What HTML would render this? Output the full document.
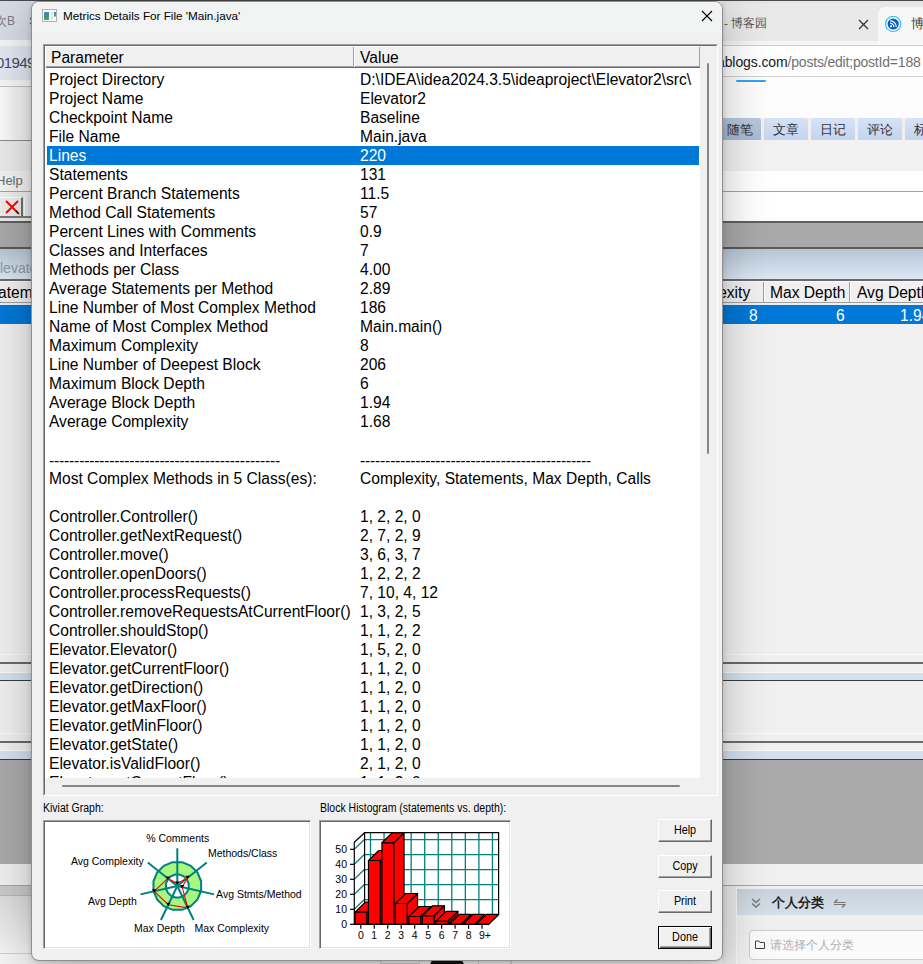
<!DOCTYPE html>
<html><head><meta charset="utf-8">
<style>
*{box-sizing:border-box;margin:0;padding:0}
html,body{width:923px;height:964px;overflow:hidden;background:#f0f0f0;font-family:"Liberation Sans",sans-serif;position:relative}
.a{position:absolute}
.t{position:absolute;white-space:pre;line-height:1}
.r{position:absolute;left:0;width:655px;height:19px;font-size:15.6px;line-height:19px;color:#000;white-space:pre}
.r span{position:absolute;top:-0.5px}
.r .p{left:4px}
.r .v{left:315px}
.r .d{letter-spacing:-0.17px;top:0.5px}
.sel{background:#0078d7;color:#fff;left:2px;width:652px}
.sel .p{left:2px}.sel .v{left:313px}
.hd{position:absolute;height:21px;background:#f0f0f0;border-top:1px solid #fff;border-left:1px solid #fff;box-shadow:inset -1px -1px 0 #a0a0a0, 1px 1px 0 #696969;font-size:15.6px;white-space:pre}
.hd span{position:absolute;left:5px;top:1px;line-height:19px}
.sm{font-size:12px;transform:scaleX(0.875);transform-origin:0 0;color:#000}
.box{position:absolute;background:#fff;border-top:1px solid #a0a0a0;border-left:1px solid #a0a0a0;border-right:1px solid #fff;border-bottom:1px solid #fff;box-shadow:inset 1px 1px 0 #696969, inset -1px -1px 0 #e3e3e3}
.btn{position:absolute;width:54px;height:23px;background:#f0f0f0;border-top:1px solid #fff;border-left:1px solid #fff;border-right:1px solid #696969;border-bottom:1px solid #696969;box-shadow:inset -1px -1px 0 #a0a0a0;font-size:12px;text-align:center}
.btn span{position:absolute;left:0;right:0;top:4px;line-height:1;transform:scaleX(0.9)}
.def{border:1px solid #000;box-shadow:inset 1px 1px 0 #fff,inset -1px -1px 0 #696969,inset -2px -2px 0 #a0a0a0}
</style></head><body>
<!-- ===== background ===== -->
<div id="bg">
<div class="a" style="left:0;top:0;width:923px;height:1px;background:#4a4a4a"></div>
<!-- left strip top -->
<div class="a" style="left:0;top:1px;width:40px;height:39px;background:#d8dde5"></div>
<div class="t" style="left:-5px;top:15px;font-size:12px;color:#7a7a7a">次B</div><div class="a" style="left:16px;top:12px;width:8px;height:16px;background:linear-gradient(90deg,rgba(216,221,229,0),#d8dde5)"></div><svg class="a" style="left:29px;top:17px" width="6" height="8"><path d="M1 1 L7 7 M7 1 L1 7" stroke="#555" stroke-width="1.2"/></svg>
<div class="a" style="left:0;top:40px;width:40px;height:6px;background:#f6f6f6"></div>
<div class="a" style="left:0;top:46px;width:40px;height:34px;background:#e3e8f1"></div>
<div class="t" style="left:-4px;top:55px;font-size:15px;letter-spacing:-0.6px;color:#3a4a66">01949</div>
<div class="a" style="left:0;top:80px;width:40px;height:6px;background:#f7f7f7"></div>
<div class="a" style="left:0;top:86px;width:40px;height:1px;background:#c4c4c4"></div>
<div class="a" style="left:0;top:87px;width:40px;height:53px;background:linear-gradient(90deg,#fbfbfb,#eaeaea)"></div>
<div class="a" style="left:0;top:140px;width:40px;height:1px;background:#8c8c8c"></div>
<div class="a" style="left:0;top:141px;width:40px;height:30px;background:#ebebeb"></div>
<div class="a" style="left:0;top:171px;width:40px;height:20px;background:#f3f3f3"></div>
<div class="t" style="left:-4px;top:174px;font-size:13px;color:#6a6a6a">Help</div>
<div class="a" style="left:0;top:216px;width:40px;height:2px;background:#7a7a7a"></div>
<div class="a" style="left:0;top:192px;width:40px;height:24px;background:#efefef"></div>
<div class="a" style="left:1px;top:197px;width:22px;height:19px;background:#ececec;border-right:2px solid #6e6e6e;border-top:1px solid #fff"></div>
<svg class="a" style="left:3px;top:199px" width="18" height="16"><path d="M3 2 L15 14 M15 2 L3 14" stroke="#f00" stroke-width="1.8"/><path d="M13 12 L16 15" stroke="#000" stroke-width="1.2"/></svg>
<div class="a" style="left:24px;top:197px;width:10px;height:19px;background:#ececec;border-left:1px solid #fff"></div>
<!-- right strip top -->
<div class="a" style="left:722px;top:1px;width:201px;height:44px;background:#e6e6e6"></div><div class="a" style="left:722px;top:41px;width:201px;height:4px;background:#f5f5f5"></div><div class="a" style="left:700px;top:4px;width:178px;height:37px;background:#e9e9e9;border-radius:0 0 6px 0"></div>
<div class="a" style="left:878px;top:7px;width:60px;height:38px;background:#f7f7f7;border-radius:7px 0 0 0"></div>
<div class="t" style="left:724px;top:18px;font-size:11.8px;color:#555">- 博客园</div>
<svg class="a" style="left:858px;top:19px" width="11" height="11"><path d="M1 1 L10 10 M10 1 L1 10" stroke="#333" stroke-width="1.3"/></svg>
<svg class="a" style="left:885px;top:16px" width="17" height="17"><circle cx="8.2" cy="8" r="7.6" fill="#fff" stroke="#3ec4f6" stroke-width="1.3"/><circle cx="8.2" cy="8" r="5.6" fill="#0b5fc1"/><circle cx="6" cy="10.3" r="1.1" fill="#fff"/><path d="M5.2 7.3 A3.6 3.6 0 0 1 8.9 11 M5.2 4.9 A6 6 0 0 1 11.3 11" stroke="#fff" stroke-width="1.2" fill="none"/></svg>
<div class="t" style="left:911px;top:17px;font-size:13px;color:#3a3a3a">博</div>
<div class="a" style="left:722px;top:45px;width:201px;height:1px;background:#cfcfcf"></div>
<div class="a" style="left:722px;top:46px;width:201px;height:30px;background:#ffffff"></div>
<div class="t" style="left:717px;top:55px;font-size:14px;letter-spacing:-0.1px;color:#1a1a1a">ablogs.com<span style="color:#6f6f6f;letter-spacing:-0.2px">/posts/edit;postId=188</span></div>
<div class="a" style="left:722px;top:76px;width:201px;height:1px;background:#cfcfcf"></div>
<div class="a" style="left:722px;top:77px;width:201px;height:41px;background:#fdfdfd"></div>
<div class="a" style="left:736px;top:80px;width:30px;height:2px;background:#36a3f0;border-radius:1px"></div>
<div class="a" style="left:722px;top:118px;width:39px;height:22px;background:linear-gradient(#b9c8df,#a8bad6);border-radius:0 3px 0 0"></div>
<div class="a" style="left:764px;top:118px;width:44px;height:22px;background:linear-gradient(#d6e3f7,#c3d4ee);border-radius:3px 3px 0 0"></div>
<div class="a" style="left:811px;top:118px;width:44px;height:22px;background:linear-gradient(#d6e3f7,#c3d4ee);border-radius:3px 3px 0 0"></div>
<div class="a" style="left:858px;top:118px;width:44px;height:22px;background:linear-gradient(#d6e3f7,#c3d4ee);border-radius:3px 3px 0 0"></div>
<div class="a" style="left:905px;top:118px;width:44px;height:22px;background:linear-gradient(#d6e3f7,#c3d4ee);border-radius:3px 3px 0 0"></div>
<div class="t" style="left:727px;top:123px;font-size:13px;color:#333">随笔</div>
<div class="t" style="left:773px;top:123px;font-size:13px;color:#333">文章</div>
<div class="t" style="left:820px;top:123px;font-size:13px;color:#333">日记</div>
<div class="t" style="left:867px;top:123px;font-size:13px;color:#333">评论</div>
<div class="t" style="left:914px;top:123px;font-size:13px;color:#333">标</div>
<div class="a" style="left:722px;top:140px;width:201px;height:31px;background:#f2f2f2"></div>
<div class="a" style="left:722px;top:171px;width:201px;height:20px;background:#ffffff"></div>
<div class="a" style="left:722px;top:192px;width:201px;height:29px;background:#ffffff"></div>
<!-- shared bands -->
<div class="a" style="left:0;top:191px;width:923px;height:1px;background:#a4a4a4"></div>
<div class="a" style="left:0;top:218px;width:40px;height:3px;background:#ececec"></div>
<div class="a" style="left:0;top:221px;width:923px;height:2px;background:#5f5f5f"></div>
<div class="a" style="left:0;top:223px;width:923px;height:24px;background:#a9a9a9"></div>
<div class="a" style="left:0;top:247px;width:923px;height:2px;background:#5a5a5a"></div>
<div class="a" style="left:0;top:249px;width:923px;height:30px;background:linear-gradient(#b6c6d6,#dce7f2)"></div>
<div class="t" style="left:0px;top:261px;font-size:14px;color:#8d98a6">levato</div>
<div class="a" style="left:0;top:279px;width:923px;height:2px;background:#6a6a6a"></div><div class="a" style="left:0;top:281px;width:923px;height:1px;background:#fafafa"></div>
<div class="a" style="left:0;top:282px;width:923px;height:21px;background:#f0f0f0"></div>
<div class="a" style="left:0;top:302px;width:923px;height:1px;background:#a0a0a0"></div>
<div class="a" style="left:0;top:303px;width:923px;height:2px;background:#f0f0f0"></div>
<div class="t" style="left:-2px;top:285px;font-size:15.6px;color:#000">atem</div>
<div class="a" style="left:763px;top:282px;width:1px;height:20px;background:#a0a0a0"></div>
<div class="a" style="left:764px;top:282px;width:1px;height:20px;background:#fff"></div>
<div class="a" style="left:849px;top:282px;width:1px;height:20px;background:#a0a0a0"></div>
<div class="a" style="left:850px;top:282px;width:1px;height:20px;background:#fff"></div>
<div class="t" style="left:706px;top:285px;font-size:15.6px;color:#000">plexity</div>
<div class="t" style="left:770px;top:285px;font-size:15.6px;color:#000">Max Depth</div>
<div class="t" style="left:857px;top:285px;font-size:15.6px;color:#000">Avg Depth</div>
<div class="a" style="left:0;top:305px;width:923px;height:19px;background:#0078d7"></div>
<div class="t" style="left:749px;top:308px;font-size:15.6px;color:#fff">8</div>
<div class="t" style="left:836px;top:308px;font-size:15.6px;color:#fff">6</div>
<div class="t" style="left:900px;top:308px;font-size:15.6px;color:#fff">1.94</div>
<div class="a" style="left:0;top:324px;width:923px;height:330px;background:#f0f0f0"></div>
<div class="a" style="left:0;top:654px;width:923px;height:1px;background:#fbfbfb"></div>
<div class="a" style="left:0;top:662px;width:923px;height:2px;background:#6a6a6a"></div>
<div class="a" style="left:0;top:672px;width:923px;height:1px;background:#fafafa"></div>
<div class="a" style="left:0;top:673px;width:923px;height:7px;background:#d3e1ef"></div>
<div class="a" style="left:0;top:680px;width:923px;height:1px;background:#3c3c3c"></div>
<div class="a" style="left:0;top:733px;width:923px;height:1px;background:#fbfbfb"></div>
<div class="a" style="left:0;top:741px;width:923px;height:2px;background:#6a6a6a"></div>
<div class="a" style="left:0;top:750px;width:923px;height:1px;background:#fafafa"></div>
<div class="a" style="left:0;top:751px;width:923px;height:8px;background:#d3e1ef"></div>
<div class="a" style="left:0;top:759px;width:923px;height:1px;background:#3c3c3c"></div>
<div class="a" style="left:0;top:760px;width:923px;height:104px;background:#aaaaaa"></div>
<div class="a" style="left:0;top:864px;width:923px;height:21px;background:#f0f0f0"></div>
<div class="a" style="left:0;top:885px;width:923px;height:1px;background:#a8a8a8"></div>
<div class="a" style="left:0;top:886px;width:40px;height:9px;background:#cacaca"></div>
<div class="a" style="left:0;top:895px;width:40px;height:1px;background:#b8b8b8"></div>
<div class="a" style="left:0;top:896px;width:40px;height:57px;background:linear-gradient(#dcdcdc,#f4f4f4)"></div>
<div class="a" style="left:0;top:954px;width:923px;height:10px;background:#f4f4f4"></div><div class="a" style="left:0;top:953px;width:923px;height:1px;background:#cfcfcf"></div>
<div class="a" style="left:722px;top:886px;width:201px;height:78px;background:#f0f0f0"></div>
<div class="a" style="left:722px;top:886px;width:15px;height:78px;background:#e9e9e9"></div><div class="a" style="left:736px;top:886px;width:1px;height:78px;background:#f8f8f8"></div><div class="a" style="left:737px;top:889px;width:186px;height:26px;background:linear-gradient(#c9d3dd,#d6dfe8)"></div>
<svg class="a" style="left:749px;top:896px" width="14" height="14"><path d="M3 3 L7 6.5 L11 3 M3 7.5 L7 11 L11 7.5" stroke="#777" stroke-width="1.6" fill="none"/></svg>
<div class="t" style="left:772px;top:896px;font-size:13px;font-weight:bold;color:#222">个人分类</div>
<div class="t" style="left:833px;top:895px;font-size:16px;color:#777">⇋</div>
<div class="a" style="left:737px;top:920px;width:186px;height:44px;background:#efefef"></div>
<div class="a" style="left:749px;top:930px;width:180px;height:30px;background:#fafafa;border:1px solid #cdcdcd;border-radius:4px"></div>
<svg class="a" style="left:754px;top:939px" width="12" height="11"><path d="M1.5 2 H5 L6 3.5 H10.5 V9.5 H1.5 Z" stroke="#444" stroke-width="1" fill="none"/></svg>
<div class="t" style="left:770px;top:939px;font-size:12px;color:#b0b0b0">请选择个人分类</div>
<div class="a" style="left:380px;top:957px;width:40px;height:7px;border:1px solid #cfcfcf;border-radius:20px 20px 0 0"></div>
<div class="a" style="left:430px;top:958px;width:34px;height:8px;background:#111;border-radius:12px 12px 0 0"></div>
<div class="a" style="left:478px;top:955px;width:1px;height:9px;background:#cfcfcf"></div>
<div class="a" style="left:510px;top:955px;width:2px;height:9px;background:#d6d6d6"></div>
</div>

<!-- ===== dialog ===== -->
<div id="dlg" class="a" style="left:31px;top:1px;width:692px;height:960px;background:#f0f0f0;border:1px solid #8f8f8f;border-radius:8px;box-shadow:0 1px 5px rgba(0,0,0,0.18),0 8px 48px rgba(0,0,0,0.26);overflow:hidden">
  <div class="a" style="left:0;top:0;width:690px;height:31px;background:#f2f4f3"></div>
</div>
<!-- title -->
<svg class="a" style="left:42px;top:9px" width="15" height="13"><defs><linearGradient id="ig" x1="0" y1="0" x2="0.4" y2="1"><stop offset="0" stop-color="#5a86c8"/><stop offset="0.5" stop-color="#3f8a90"/><stop offset="1" stop-color="#4aaa60"/></linearGradient></defs><rect x="0.5" y="0.5" width="14" height="12" fill="#fbfbfb" stroke="#aeb2b6"/><rect x="2" y="3" width="5" height="8" fill="url(#ig)"/><rect x="8.8" y="3" width="2.4" height="8" fill="#e4e4e4"/><rect x="12" y="3" width="2" height="4.6" fill="url(#ig)"/></svg>
<div class="t" style="left:63px;top:10px;font-size:11.7px;color:#000">Metrics Details For File 'Main.java'</div>
<svg class="a" style="left:701px;top:10px" width="12" height="12"><path d="M1 1 L11 11 M11 1 L1 11" stroke="#000" stroke-width="1.1"/></svg>
<!-- list box -->
<div class="a" style="left:43px;top:44px;width:675px;height:752px;border-top:1px solid #a0a0a0;border-left:1px solid #a0a0a0;border-right:1px solid #fff;border-bottom:1px solid #fff"></div>
<div class="a" style="left:44px;top:45px;width:673px;height:750px;border-top:1px solid #696969;border-left:1px solid #696969;border-right:1px solid #e3e3e3;border-bottom:1px solid #e3e3e3"></div>
<div class="a" style="left:45px;top:46px;width:671px;height:748px;background:#fff"></div>
<div class="hd" style="left:45px;top:46px;width:309px"><span>Parameter</span></div>
<div class="hd" style="left:354px;top:46px;width:346px"><span>Value</span></div>
<div id="rows" class="a" style="left:45px;top:68px;width:655px;height:710px;overflow:hidden">
<div class="a" style="left:0;top:2px;width:655px;height:720px">
<div class="r" style="top:0px"><span class="p">Project Directory</span><span class="v">D:\IDEA\idea2024.3.5\ideaproject\Elevator2\src\</span></div>
<div class="r" style="top:19px"><span class="p">Project Name</span><span class="v">Elevator2</span></div>
<div class="r" style="top:38px"><span class="p">Checkpoint Name</span><span class="v">Baseline</span></div>
<div class="r" style="top:57px"><span class="p">File Name</span><span class="v">Main.java</span></div>
<div class="r sel" style="top:76px"><span class="p">Lines</span><span class="v">220</span></div>
<div class="r" style="top:95px"><span class="p">Statements</span><span class="v">131</span></div>
<div class="r" style="top:114px"><span class="p">Percent Branch Statements</span><span class="v">11.5</span></div>
<div class="r" style="top:133px"><span class="p">Method Call Statements</span><span class="v">57</span></div>
<div class="r" style="top:152px"><span class="p">Percent Lines with Comments</span><span class="v">0.9</span></div>
<div class="r" style="top:171px"><span class="p">Classes and Interfaces</span><span class="v">7</span></div>
<div class="r" style="top:190px"><span class="p">Methods per Class</span><span class="v">4.00</span></div>
<div class="r" style="top:209px"><span class="p">Average Statements per Method</span><span class="v">2.89</span></div>
<div class="r" style="top:228px"><span class="p">Line Number of Most Complex Method</span><span class="v">186</span></div>
<div class="r" style="top:247px"><span class="p">Name of Most Complex Method</span><span class="v">Main.main()</span></div>
<div class="r" style="top:266px"><span class="p">Maximum Complexity</span><span class="v">8</span></div>
<div class="r" style="top:285px"><span class="p">Line Number of Deepest Block</span><span class="v">206</span></div>
<div class="r" style="top:304px"><span class="p">Maximum Block Depth</span><span class="v">6</span></div>
<div class="r" style="top:323px"><span class="p">Average Block Depth</span><span class="v">1.94</span></div>
<div class="r" style="top:342px"><span class="p">Average Complexity</span><span class="v">1.68</span></div>
<div class="r" style="top:361px"><span class="p"></span><span class="v"></span></div>
<div class="r" style="top:380px"><span class="p d">----------------------------------------------</span><span class="v d">----------------------------------------------</span></div>
<div class="r" style="top:399px"><span class="p">Most Complex Methods in 5 Class(es):</span><span class="v">Complexity, Statements, Max Depth, Calls</span></div>
<div class="r" style="top:418px"><span class="p"></span><span class="v"></span></div>
<div class="r" style="top:437px"><span class="p">Controller.Controller()</span><span class="v">1, 2, 2, 0</span></div>
<div class="r" style="top:456px"><span class="p">Controller.getNextRequest()</span><span class="v">2, 7, 2, 9</span></div>
<div class="r" style="top:475px"><span class="p">Controller.move()</span><span class="v">3, 6, 3, 7</span></div>
<div class="r" style="top:494px"><span class="p">Controller.openDoors()</span><span class="v">1, 2, 2, 2</span></div>
<div class="r" style="top:513px"><span class="p">Controller.processRequests()</span><span class="v">7, 10, 4, 12</span></div>
<div class="r" style="top:532px"><span class="p">Controller.removeRequestsAtCurrentFloor()</span><span class="v">1, 3, 2, 5</span></div>
<div class="r" style="top:551px"><span class="p">Controller.shouldStop()</span><span class="v">1, 1, 2, 2</span></div>
<div class="r" style="top:570px"><span class="p">Elevator.Elevator()</span><span class="v">1, 5, 2, 0</span></div>
<div class="r" style="top:589px"><span class="p">Elevator.getCurrentFloor()</span><span class="v">1, 1, 2, 0</span></div>
<div class="r" style="top:608px"><span class="p">Elevator.getDirection()</span><span class="v">1, 1, 2, 0</span></div>
<div class="r" style="top:627px"><span class="p">Elevator.getMaxFloor()</span><span class="v">1, 1, 2, 0</span></div>
<div class="r" style="top:646px"><span class="p">Elevator.getMinFloor()</span><span class="v">1, 1, 2, 0</span></div>
<div class="r" style="top:665px"><span class="p">Elevator.getState()</span><span class="v">1, 1, 2, 0</span></div>
<div class="r" style="top:684px"><span class="p">Elevator.isValidFloor()</span><span class="v">2, 1, 2, 0</span></div>
<div class="r" style="top:703px"><span class="p">Elevator.setCurrentFloor()</span><span class="v">1, 1, 2, 0</span></div>
</div>
</div>
<div class="a" style="left:700px;top:46px;width:17px;height:749px;background:#f0f0f0"></div>
<div class="a" style="left:45px;top:778px;width:655px;height:17px;background:#f0f0f0"></div>
<div class="a" style="left:707px;top:63px;width:2px;height:391px;background:#858585;border-radius:1px"></div>
<div class="a" style="left:62px;top:785px;width:618px;height:2px;background:#858585;border-radius:1px"></div>
<!-- bottom labels -->
<div class="t sm" style="left:43px;top:802px">Kiviat Graph:</div>
<div class="t sm" style="left:320px;top:802px">Block Histogram (statements vs. depth):</div>
<!-- kiviat box -->
<div class="box" style="left:43px;top:820px;width:268px;height:129px"></div>
<!-- histogram box -->
<div class="box" style="left:319px;top:820px;width:192px;height:129px"></div>
<!-- GRAPHS -->
<svg class="a" style="left:43px;top:820px" width="268" height="128" viewBox="0 0 268 128">
<polygon points="139.04,42.17 147.80,45.80 154.50,52.50 158.13,61.26 158.13,70.74 154.50,79.50 147.80,86.20 139.04,89.83 129.56,89.83 120.80,86.20 114.10,79.50 110.47,70.74 110.47,61.26 114.10,52.50 120.80,45.80 129.56,42.17" fill="#a6f87e" stroke="#008080" stroke-width="2"/>
<polygon points="136.56,54.62 140.74,56.35 143.95,59.56 145.68,63.74 145.68,68.26 143.95,72.44 140.74,75.65 136.56,77.38 132.04,77.38 127.86,75.65 124.65,72.44 122.92,68.26 122.92,63.74 124.65,59.56 127.86,56.35 132.04,54.62" fill="#ffffff" stroke="#008080" stroke-width="2"/>
<line x1="134.30" y1="66.00" x2="134.30" y2="28.30" stroke="#008080" stroke-width="2"/>
<line x1="134.30" y1="66.00" x2="163.78" y2="42.49" stroke="#008080" stroke-width="2"/>
<line x1="134.30" y1="66.00" x2="171.05" y2="74.39" stroke="#008080" stroke-width="2"/>
<line x1="134.30" y1="66.00" x2="150.66" y2="99.97" stroke="#008080" stroke-width="2"/>
<line x1="134.30" y1="66.00" x2="117.94" y2="99.97" stroke="#008080" stroke-width="2"/>
<line x1="134.30" y1="66.00" x2="97.55" y2="74.39" stroke="#008080" stroke-width="2"/>
<line x1="134.30" y1="66.00" x2="104.82" y2="42.49" stroke="#008080" stroke-width="2"/>
<polygon points="134.30,63.50 144.62,57.77 139.17,67.11 144.80,87.80 125.28,84.74 111.19,71.27 124.84,58.46" fill="none" stroke="#ff0000" stroke-width="1.1"/>
<path d="M132.10,61.50 L136.50,61.50 L134.30,64.70 Z" fill="#000"/>
<path d="M142.42,55.77 L146.82,55.77 L144.62,58.97 Z" fill="#000"/>
<path d="M136.97,65.11 L141.37,65.11 L139.17,68.31 Z" fill="#000"/>
<path d="M142.60,85.80 L147.00,85.80 L144.80,89.00 Z" fill="#000"/>
<path d="M123.08,82.74 L127.48,82.74 L125.28,85.94 Z" fill="#000"/>
<path d="M108.99,69.27 L113.39,69.27 L111.19,72.47 Z" fill="#000"/>
<path d="M122.64,56.46 L127.04,56.46 L124.84,59.66 Z" fill="#000"/>
<text x="103.20" y="22.30" font-size="10.5" font-family="Liberation Sans">% Comments</text>
<text x="164.90" y="37.20" font-size="10.5" font-family="Liberation Sans">Methods/Class</text>
<text x="27.90" y="44.60" font-size="10.5" font-family="Liberation Sans">Avg Complexity</text>
<text x="173.10" y="78.40" font-size="10.5" font-family="Liberation Sans">Avg Stmts/Method</text>
<text x="44.90" y="84.60" font-size="10.5" font-family="Liberation Sans">Avg Depth</text>
<text x="91.00" y="112.30" font-size="10.5" font-family="Liberation Sans">Max Depth</text>
<text x="151.40" y="112.30" font-size="10.5" font-family="Liberation Sans">Max Complexity</text>
</svg>
<svg class="a" style="left:319px;top:820px" width="191" height="128" viewBox="0 0 191 128">
<line x1="51.50" y1="12.70" x2="51.50" y2="94.30" stroke="#008080" stroke-width="1.3"/>
<line x1="65.05" y1="12.70" x2="65.05" y2="94.30" stroke="#008080" stroke-width="1.3"/>
<line x1="78.60" y1="12.70" x2="78.60" y2="94.30" stroke="#008080" stroke-width="1.3"/>
<line x1="92.15" y1="12.70" x2="92.15" y2="94.30" stroke="#008080" stroke-width="1.3"/>
<line x1="105.70" y1="12.70" x2="105.70" y2="94.30" stroke="#008080" stroke-width="1.3"/>
<line x1="119.25" y1="12.70" x2="119.25" y2="94.30" stroke="#008080" stroke-width="1.3"/>
<line x1="132.80" y1="12.70" x2="132.80" y2="94.30" stroke="#008080" stroke-width="1.3"/>
<line x1="146.35" y1="12.70" x2="146.35" y2="94.30" stroke="#008080" stroke-width="1.3"/>
<line x1="159.90" y1="12.70" x2="159.90" y2="94.30" stroke="#008080" stroke-width="1.3"/>
<line x1="173.45" y1="12.70" x2="173.45" y2="94.30" stroke="#008080" stroke-width="1.3"/>
<line x1="45.60" y1="19.60" x2="179.60" y2="19.60" stroke="#008080" stroke-width="1.3"/>
<line x1="45.60" y1="34.60" x2="179.60" y2="34.60" stroke="#008080" stroke-width="1.3"/>
<line x1="45.60" y1="49.60" x2="179.60" y2="49.60" stroke="#008080" stroke-width="1.3"/>
<line x1="45.60" y1="64.60" x2="179.60" y2="64.60" stroke="#008080" stroke-width="1.3"/>
<line x1="45.60" y1="79.60" x2="179.60" y2="79.60" stroke="#008080" stroke-width="1.3"/>
<line x1="35.30" y1="89.30" x2="45.60" y2="79.30" stroke="#008080" stroke-width="1.2"/>
<line x1="35.30" y1="74.30" x2="45.60" y2="64.30" stroke="#008080" stroke-width="1.2"/>
<line x1="35.30" y1="59.30" x2="45.60" y2="49.30" stroke="#008080" stroke-width="1.2"/>
<line x1="35.30" y1="44.30" x2="45.60" y2="34.30" stroke="#008080" stroke-width="1.2"/>
<line x1="35.30" y1="29.30" x2="45.60" y2="19.30" stroke="#008080" stroke-width="1.2"/>
<path d="M35.30,104.30 L35.30,22.30 L45.60,12.70 L179.60,12.70 L179.60,94.30" stroke="#000" stroke-width="1.2" fill="none"/>
<path d="M45.60,12.70 L45.60,94.30" stroke="#000" stroke-width="1.2" fill="none"/>
<path d="M35.30,104.30 L169.60,104.30 L179.60,94.30" stroke="#000" stroke-width="1.2" fill="none"/>
<path d="M47.80,92.20 L58.10,82.20 L58.10,94.30 L47.80,104.30 Z" fill="#ff0000" stroke="#000" stroke-width="1.2" stroke-linejoin="round"/>
<path d="M36.00,92.20 L46.30,82.20 L58.10,82.20 L47.80,92.20 Z" fill="#ff0000" stroke="#000" stroke-width="1.2" stroke-linejoin="round"/>
<rect x="36.00" y="92.20" width="11.80" height="12.10" fill="#ff0000" stroke="#000" stroke-width="1.2" stroke-linejoin="round"/>
<path d="M61.27,40.50 L71.57,30.50 L71.57,94.30 L61.27,104.30 Z" fill="#ff0000" stroke="#000" stroke-width="1.2" stroke-linejoin="round"/>
<path d="M49.47,40.50 L59.77,30.50 L71.57,30.50 L61.27,40.50 Z" fill="#ff0000" stroke="#000" stroke-width="1.2" stroke-linejoin="round"/>
<rect x="49.47" y="40.50" width="11.80" height="63.80" fill="#ff0000" stroke="#000" stroke-width="1.2" stroke-linejoin="round"/>
<path d="M74.74,22.80 L85.04,12.80 L85.04,94.30 L74.74,104.30 Z" fill="#ff0000" stroke="#000" stroke-width="1.2" stroke-linejoin="round"/>
<path d="M62.94,22.80 L73.24,12.80 L85.04,12.80 L74.74,22.80 Z" fill="#ff0000" stroke="#000" stroke-width="1.2" stroke-linejoin="round"/>
<rect x="62.94" y="22.80" width="11.80" height="81.50" fill="#ff0000" stroke="#000" stroke-width="1.2" stroke-linejoin="round"/>
<path d="M88.21,83.50 L98.51,73.50 L98.51,94.30 L88.21,104.30 Z" fill="#ff0000" stroke="#000" stroke-width="1.2" stroke-linejoin="round"/>
<path d="M76.41,83.50 L86.71,73.50 L98.51,73.50 L88.21,83.50 Z" fill="#ff0000" stroke="#000" stroke-width="1.2" stroke-linejoin="round"/>
<rect x="76.41" y="83.50" width="11.80" height="20.80" fill="#ff0000" stroke="#000" stroke-width="1.2" stroke-linejoin="round"/>
<path d="M101.68,96.50 L111.98,86.50 L111.98,94.30 L101.68,104.30 Z" fill="#ff0000" stroke="#000" stroke-width="1.2" stroke-linejoin="round"/>
<path d="M89.88,96.50 L100.18,86.50 L111.98,86.50 L101.68,96.50 Z" fill="#ff0000" stroke="#000" stroke-width="1.2" stroke-linejoin="round"/>
<rect x="89.88" y="96.50" width="11.80" height="7.80" fill="#ff0000" stroke="#000" stroke-width="1.2" stroke-linejoin="round"/>
<path d="M115.15,95.80 L125.45,85.80 L125.45,94.30 L115.15,104.30 Z" fill="#ff0000" stroke="#000" stroke-width="1.2" stroke-linejoin="round"/>
<path d="M103.35,95.80 L113.65,85.80 L125.45,85.80 L115.15,95.80 Z" fill="#ff0000" stroke="#000" stroke-width="1.2" stroke-linejoin="round"/>
<rect x="103.35" y="95.80" width="11.80" height="8.50" fill="#ff0000" stroke="#000" stroke-width="1.2" stroke-linejoin="round"/>
<path d="M128.62,101.40 L138.92,91.40 L138.92,94.30 L128.62,104.30 Z" fill="#ff0000" stroke="#000" stroke-width="1.2" stroke-linejoin="round"/>
<path d="M116.82,101.40 L127.12,91.40 L138.92,91.40 L128.62,101.40 Z" fill="#ff0000" stroke="#000" stroke-width="1.2" stroke-linejoin="round"/>
<rect x="116.82" y="101.40" width="11.80" height="2.90" fill="#ff0000" stroke="#000" stroke-width="1.2" stroke-linejoin="round"/>
<path d="M130.29,104.30 L140.59,94.30 L152.39,94.30 L142.09,104.30 Z" fill="#ff0000" stroke="#000" stroke-width="1.2" stroke-linejoin="round"/>
<path d="M143.76,104.30 L154.06,94.30 L165.86,94.30 L155.56,104.30 Z" fill="#ff0000" stroke="#000" stroke-width="1.2" stroke-linejoin="round"/>
<path d="M157.23,104.30 L167.53,94.30 L179.90,94.30 L169.60,104.30 Z" fill="#ff0000" stroke="#000" stroke-width="1.2" stroke-linejoin="round"/>
<line x1="31" y1="104.30" x2="35.30" y2="104.30" stroke="#000" stroke-width="1.2"/>
<text x="28" y="108.30" text-anchor="end" font-size="10.5" font-family="Liberation Sans">0</text>
<line x1="31" y1="89.30" x2="35.30" y2="89.30" stroke="#000" stroke-width="1.2"/>
<text x="28" y="93.30" text-anchor="end" font-size="10.5" font-family="Liberation Sans">10</text>
<line x1="31" y1="74.30" x2="35.30" y2="74.30" stroke="#000" stroke-width="1.2"/>
<text x="28" y="78.30" text-anchor="end" font-size="10.5" font-family="Liberation Sans">20</text>
<line x1="31" y1="59.30" x2="35.30" y2="59.30" stroke="#000" stroke-width="1.2"/>
<text x="28" y="63.30" text-anchor="end" font-size="10.5" font-family="Liberation Sans">30</text>
<line x1="31" y1="44.30" x2="35.30" y2="44.30" stroke="#000" stroke-width="1.2"/>
<text x="28" y="48.30" text-anchor="end" font-size="10.5" font-family="Liberation Sans">40</text>
<line x1="31" y1="29.30" x2="35.30" y2="29.30" stroke="#000" stroke-width="1.2"/>
<text x="28" y="33.30" text-anchor="end" font-size="10.5" font-family="Liberation Sans">50</text>
<line x1="35.30" y1="104.30" x2="169.60" y2="104.30" stroke="#000" stroke-width="1.3"/>
<line x1="41.80" y1="104.30" x2="41.80" y2="108.80" stroke="#000" stroke-width="1.2"/>
<text x="41.80" y="119.00" text-anchor="middle" font-size="10.5" font-family="Liberation Sans">0</text>
<line x1="55.27" y1="104.30" x2="55.27" y2="108.80" stroke="#000" stroke-width="1.2"/>
<text x="55.27" y="119.00" text-anchor="middle" font-size="10.5" font-family="Liberation Sans">1</text>
<line x1="68.74" y1="104.30" x2="68.74" y2="108.80" stroke="#000" stroke-width="1.2"/>
<text x="68.74" y="119.00" text-anchor="middle" font-size="10.5" font-family="Liberation Sans">2</text>
<line x1="82.21" y1="104.30" x2="82.21" y2="108.80" stroke="#000" stroke-width="1.2"/>
<text x="82.21" y="119.00" text-anchor="middle" font-size="10.5" font-family="Liberation Sans">3</text>
<line x1="95.68" y1="104.30" x2="95.68" y2="108.80" stroke="#000" stroke-width="1.2"/>
<text x="95.68" y="119.00" text-anchor="middle" font-size="10.5" font-family="Liberation Sans">4</text>
<line x1="109.15" y1="104.30" x2="109.15" y2="108.80" stroke="#000" stroke-width="1.2"/>
<text x="109.15" y="119.00" text-anchor="middle" font-size="10.5" font-family="Liberation Sans">5</text>
<line x1="122.62" y1="104.30" x2="122.62" y2="108.80" stroke="#000" stroke-width="1.2"/>
<text x="122.62" y="119.00" text-anchor="middle" font-size="10.5" font-family="Liberation Sans">6</text>
<line x1="136.09" y1="104.30" x2="136.09" y2="108.80" stroke="#000" stroke-width="1.2"/>
<text x="136.09" y="119.00" text-anchor="middle" font-size="10.5" font-family="Liberation Sans">7</text>
<line x1="149.56" y1="104.30" x2="149.56" y2="108.80" stroke="#000" stroke-width="1.2"/>
<text x="149.56" y="119.00" text-anchor="middle" font-size="10.5" font-family="Liberation Sans">8</text>
<line x1="163.03" y1="104.30" x2="163.03" y2="108.80" stroke="#000" stroke-width="1.2"/>
<text x="166.03" y="119.00" text-anchor="middle" font-size="10.5" font-family="Liberation Sans">9+</text>
</svg>
<!-- /GRAPHS -->
<!-- buttons -->
<div class="btn" style="left:658px;top:819px"><span>Help</span></div>
<div class="btn" style="left:658px;top:855px"><span>Copy</span></div>
<div class="btn" style="left:658px;top:890px"><span>Print</span></div>
<div class="btn def" style="left:658px;top:926px"><span>Done</span></div>
</body></html>
